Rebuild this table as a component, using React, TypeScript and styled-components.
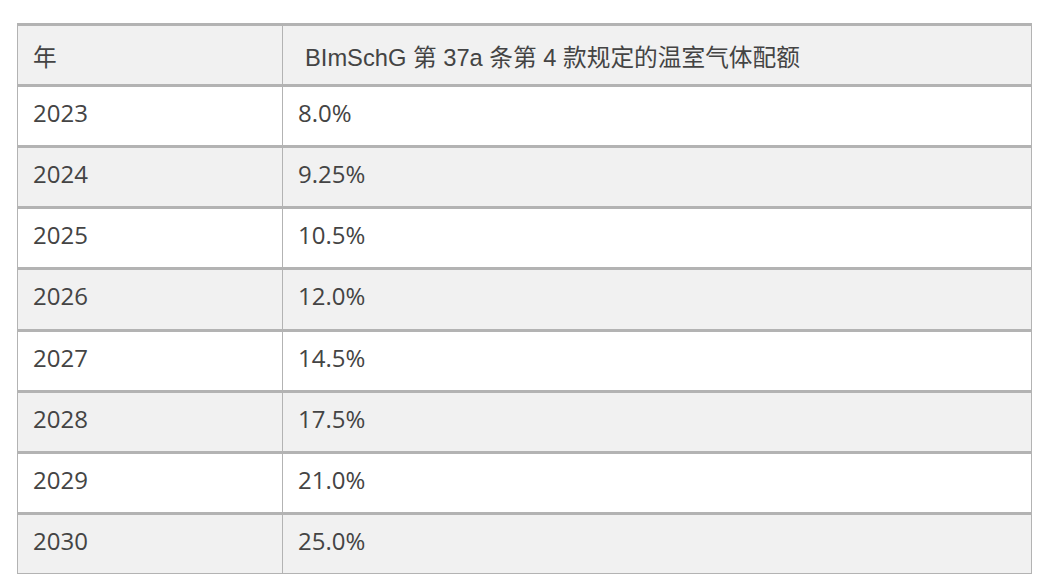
import styled, { createGlobalStyle } from "styled-components";

const rows: [string, string][] = [
  ["2023", "8.0%"],
  ["2024", "9.25%"],
  ["2025", "10.5%"],
  ["2026", "12.0%"],
  ["2027", "14.5%"],
  ["2028", "17.5%"],
  ["2029", "21.0%"],
  ["2030", "25.0%"],
];

const GlobalStyle = createGlobalStyle`
  html, body {
    margin: 0;
    padding: 0;
    background: #ffffff;
  }
`;

const Page = styled.div`
  padding: 23px 23px 0 17px;
`;

const Table = styled.div`
  width: 1015px;
  border-left: 1px solid #b3b3b3;
  border-right: 1px solid #b3b3b3;
  border-bottom: 1px solid #b3b3b3;
  box-sizing: border-box;
  font-family: "Open Sans", "Noto Sans CJK SC", sans-serif;
  color: #444444;
`;

const Row = styled.div<{ $shaded: boolean }>`
  display: grid;
  grid-template-columns: 264px 1fr;
  border-top: 3px solid #b3b3b3;
  background: ${(p) => (p.$shaded ? "#f1f1f1" : "#ffffff")};
`;

const Cell = styled.div<{ $divider?: boolean }>`
  height: 58.15px;
  box-sizing: border-box;
  padding: 9px 15px 0 15px;
  font-size: 24px;
  line-height: 33px;
  border-left: ${(p) => (p.$divider ? "1px solid #b3b3b3" : "none")};
`;

const HeadCell = styled(Cell)<{ $indent?: number }>`
  height: 58px;
  padding-top: 18px;
  padding-left: ${(p) => 15 + (p.$indent ?? 0)}px;
  font-family: "Liberation Sans", "Noto Sans CJK SC", sans-serif;
  font-size: 23.7px;
  line-height: 28px;
`;

export default function App() {
  return (
    <Page>
      <GlobalStyle />
      <Table>
        <Row $shaded>
          <HeadCell>年</HeadCell>
          <HeadCell $divider $indent={7}>
            BImSchG 第 37a 条第 4 款规定的温室气体配额
          </HeadCell>
        </Row>
        {rows.map(([year, share], i) => (
          <Row key={year} $shaded={i % 2 === 1}>
            <Cell>{year}</Cell>
            <Cell $divider>{share}</Cell>
          </Row>
        ))}
      </Table>
    </Page>
  );
}
